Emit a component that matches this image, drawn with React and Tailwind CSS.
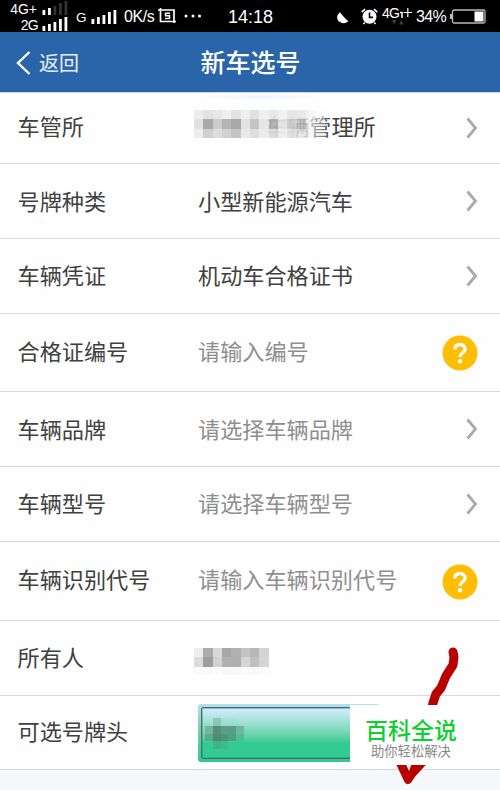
const ROWS = [
  { label: '车管所', kind: 'office', height: 'h-[71px]', shift: '-mt-[6px]' },
  { label: '号牌种类', value: '小型新能源汽车', arrow: true, height: 'h-[75px]', shift: '-mt-[3px]' },
  { label: '车辆凭证', value: '机动车合格证书', arrow: true, height: 'h-[75px]', shift: '-mt-[4px]' },
  { label: '合格证编号', placeholder: '请输入编号', help: true, height: 'h-[78px]', shift: '-mt-[6px]' },
  { label: '车辆品牌', placeholder: '请选择车辆品牌', arrow: true, height: 'h-[75px]', shift: '-mt-[3px]' },
  { label: '车辆型号', placeholder: '请选择车辆型号', arrow: true, height: 'h-[75px]', shift: '-mt-[4px]' },
  { label: '车辆识别代号', placeholder: '请输入车辆识别代号', help: true, height: 'h-[79px]', shift: '-mt-[6px]' },
  { label: '所有人', kind: 'owner', height: 'h-[75px]', shift: '-mt-[4px]' },
  { label: '可选号牌头', kind: 'plate', height: 'h-[74px]', shift: '-mt-[5px]' },
];

const OFFICE_TILES = [
  ['#e9e9e9', '#dedede', '#e3e3e3', '#eeeeee', '#dfdfdf', '#ededed', '#dcdcdc', '#eeeeee', '#e3e3e3', '#efefef', '#e3e3e3', '#e5e5e5', '#eeeeeecc', '#f8f8f866'],
  ['#dcdcdc', '#9b9b9b', '#c4c4c4', '#a9a9a9', '#9b9b9b', '#dedede', '#bcbcbc', '#e2e2e2', '#a8a8a8', '#dfdfdf', '#c6c6c6', '#a9a9a9cc', '#d8d8d866', '#eeeeee33'],
  ['#eaeaea', '#c8c8c8', '#d8d8d8', '#c9c9c9', '#bcbcbc', '#e6e6e6', '#d8d8d8', '#e9e9e9', '#d6d6d6', '#ebebeb', '#dddddd', '#d5d5d5aa', '#e2e2e266', '#f1f1f133'],
];

const OWNER_TILES = [
  ['#ededed', '#ababab', '#d9d9d9', '#a7a7a7', '#b1b1b1', '#c3c3c3', '#b7b7b7', '#d4d4d4'],
  ['#dcdcdc', '#9e9e9e', '#d2d2d2', '#b0b0b0', '#afafaf', '#d6d6d6', '#bfbfbf', '#d5d5d5'],
  ['#fbfbfb', '#fafafa', '#fdfdfd', '#f8f8f8', '#f8f8f8', '#fafafa', '#f8f8f8', '#fbfbfb'],
];

const PLATE_TILES = [
  ['#9bd6c800', '#8cc6b8', '#9bdccc44', '#95dccb44', '#9bdccc00'],
  ['#73b49f', '#568e7c', '#5f9c87', '#5c9c87', '#6bb9a0'],
  ['#58ab8b', '#498d72', '#4c9578', '#4ba27f', '#55bb96'],
  ['#3cc79500', '#3bb588', '#3ebb8e', '#3cc79500', '#3cc79500'],
];

function Mosaic({ tiles, size, className }) {
  return (
    <svg
      width={tiles[0].length * size}
      height={tiles.length * size}
      className={className}
      shapeRendering="crispEdges"
    >
      {tiles.map((row, y) =>
        row.map((fill, x) => (
          <rect key={`${x}-${y}`} x={x * size} y={y * size} width={size} height={size} fill={fill} />
        ))
      )}
    </svg>
  );
}

function Signal({ lit = 5 }) {
  const heights = [5, 7, 9, 12, 14];
  return (
    <svg width="26" height="15" className="shrink-0">
      {heights.map((h, i) => (
        <rect key={i} x={0.5 + i * 5.5} y={15 - h} width="2.8" height={h} fill={i < lit ? '#fff' : '#333'} />
      ))}
    </svg>
  );
}

function StatusBar() {
  return (
    <div className="flex h-8 items-center overflow-hidden bg-black pl-[10px] font-['Liberation_Sans',sans-serif] text-white">
      <div className="-mt-px w-[58px] shrink-0">
        <div className="flex h-4 items-center justify-between">
          <span className="-ml-px w-7 pt-[2px] text-right text-[14px] leading-4 whitespace-nowrap">4G+</span>
          <Signal lit={2} />
        </div>
        <div className="flex h-4 items-center justify-between">
          <span className="w-7 pt-[2px] text-right text-[14px] leading-4 tracking-[-0.7px]">2G</span>
          <Signal />
        </div>
      </div>
      <span className="ml-[8px] w-[15px] pt-[4px] text-[13.5px]">G</span>
      <Signal />
      <span className="ml-[7px] w-[34px] pt-px text-[16px] tracking-[-0.4px] whitespace-nowrap">0K/s</span>
      <svg width="19" height="16" viewBox="0 0 19 16" fill="none" stroke="#fff" className="shrink-0">
        <path d="M0 2h16v13M2.500 0v13.500H18" strokeWidth="1.700" />
        <path d="M12 5.200H7.500v2.600h4v2.700H7" strokeWidth="1.500" />
      </svg>
      <svg width="18" height="4" className="ml-[7px] shrink-0" fill="#fff">
        <circle cx="2" cy="2" r="1.500" />
        <circle cx="9" cy="2" r="1.500" />
        <circle cx="15.500" cy="2" r="1.500" />
      </svg>
      <span className="ml-[26px] w-[45px] shrink-0 pt-[2px] text-[18px] whitespace-nowrap">14:18</span>
      <svg width="12" height="12" className="ml-[64px] mt-[4px] shrink-0">
        <path d="M3 .3C-.7 3-.7 7.500 2.500 9.800c2.800 2 6.300 1.700 8.700-.6C8 7.500 5 4 3 .3Z" fill="#fff" />
        <path d="M3 1 10.500 9.200 4 9Z" fill="#fff" stroke="#fff" strokeWidth="0.5" />
      </svg>
      <svg width="17" height="17" viewBox="0 0 17 17" className="ml-[12px] shrink-0">
        <circle cx="8.500" cy="8.800" r="7" fill="#fff" />
        <path d="M.7 4.200 4 1.200M16.300 4.200 13 1.200M3.700 14.500 2.500 16M13.300 14.500l1.200 1.500" stroke="#fff" strokeWidth="1.600" />
        <path d="M8.500 4.500V9.400H12" fill="none" stroke="#000" strokeWidth="1.600" />
      </svg>
      <div className="relative ml-[4px] mb-[6px] flex w-[31px] shrink-0 items-center text-[14px] leading-4">
        <span className="w-[18px] tracking-[-0.7px]">4G</span>
        <svg width="12" height="12" className="shrink-0" fill="none" stroke="#fff">
          <path d="M0 5.500h2.500M2 5v6" strokeWidth="1.500" />
          <path d="M3.500 5.500H12M7.800 1v9" strokeWidth="1.200" />
        </svg>
        <svg width="12" height="5" className="absolute top-[15px] left-[10px]" fill="#3d3d3d">
          <path d="M0 0h4.500L2.250 4.500ZM7 4.500h4.500L9.250 0Z" />
        </svg>
      </div>
      <span className="ml-[3px] w-[34px] shrink-0 pt-[2px] text-[16px] tracking-[-0.600px]">34%</span>
      <svg width="36" height="15" className="shrink-0">
        <rect x="2.500" y="1" width="32.500" height="13" rx="1.500" fill="none" stroke="#bbb" strokeWidth="1.300" />
        <path d="M0 5h2v5H0Z" fill="#bbb" />
        <rect x="24.500" y="2.500" width="9" height="10" fill="#fff" />
      </svg>
    </div>
  );
}

function Header() {
  return (
    <header className="relative flex h-[61px] items-center justify-center border-b border-[#c5dcf1] bg-[#2b65a9] text-white">
      <div className="absolute left-4 flex items-center">
        <svg width="15" height="24" viewBox="0 0 15 24" fill="none" stroke="#fff" strokeWidth="2.400" className="mt-[2px]">
          <path d="M13.500 1 2 12l11.500 11" />
        </svg>
        <span className="ml-[8px] pt-px text-[20px] leading-6 text-white/90">返回</span>
      </div>
      <h1 className="pb-[2px] pl-px text-[25px] font-medium leading-8">新车选号</h1>
    </header>
  );
}

function Arrow() {
  return (
    <svg width="12" height="22" viewBox="0 0 12 22" fill="none" stroke="#aaa" strokeWidth="2.800" className="ml-auto mr-[22px] shrink-0">
      <path d="m1.500 1.500 8 9.500-8 9.500" />
    </svg>
  );
}

function Help() {
  return (
    <svg width="36" height="36" viewBox="0 0 36 36" className="ml-auto mr-[22px] mt-px shrink-0">
      <circle cx="18" cy="18" r="17.500" fill="#ffbd05" />
      <path d="M12.800 14.300c.2-3.200 2.300-4.800 5.200-4.800s5.100 1.700 5.100 4.400c0 3.800-5.100 3.900-5.100 8.100" fill="none" stroke="#fff" strokeWidth="3.300" />
      <circle cx="18" cy="26.300" r="2.200" fill="#fff" />
    </svg>
  );
}

function OfficeValue() {
  return (
    <div className="relative -mt-[6px] pl-[67px] text-[#404040]">
      车辆管理所
      <div className="absolute top-0 left-0 h-8 w-[112px] bg-white/60" />
      <Mosaic tiles={OFFICE_TILES} size={9.33} className="absolute -left-[4px] top-[1px] opacity-85" />
      <div className="absolute left-[112px] top-0 h-8 w-[24px] bg-linear-to-r from-white/50 to-transparent" />
    </div>
  );
}

function PlateValue() {
  return (
    <div className="relative mt-px flex h-[58px] w-[182px] rounded-[3px] bg-linear-to-b from-[#b5dff2] via-[#68cfae] to-[#28c98c] p-[3px]">
      <div className="w-full rounded-[2px] border-[1.5px] border-[#496e68] bg-linear-to-b from-[#cdebfa] from-5% to-[#32cb93] to-70% pt-[10px] pl-[3px] shadow-[inset_0_0_0_1px_#496e6866]">
        <Mosaic tiles={PLATE_TILES} size={7.8} />
      </div>
    </div>
  );
}

function Row({ row }) {
  return (
    <div className={`flex items-center border-b border-[#d8d8d8] pl-[17.5px] ${row.height}`}>
      <div className={`w-[180.500px] shrink-0 text-[#404040] ${row.shift}`}>{row.label}</div>
      {row.value && <div className={`text-[#404040] ${row.shift}`}>{row.value}</div>}
      {row.placeholder && <div className={`text-[#8e8e8e] ${row.shift}`}>{row.placeholder}</div>}
      {row.kind === 'office' && <OfficeValue />}
      {row.kind === 'owner' && <Mosaic tiles={OWNER_TILES} size={9.33} className="-ml-[4px] mt-[7px]" />}
      {row.kind === 'plate' && <PlateValue />}
      {(row.arrow || row.kind === 'office') && <Arrow />}
      {row.help && <Help />}
    </div>
  );
}

export default function App() {
  return (
    <div className="relative flex h-[790px] w-[500px] flex-col overflow-hidden bg-[#f4f8fa] font-['Noto_Sans_CJK_SC',sans-serif]">
      <StatusBar />
      <Header />
      <main className="bg-[#fefefe] text-[22.15px] leading-8">
        {ROWS.map(row => (
          <Row key={row.label} row={row} />
        ))}
      </main>
      <div className="absolute left-[190px] top-[93px] h-[8px] w-[140px] bg-radial from-[#eef4fb] to-transparent to-70%" />

      {/* Hand-drawn check mark, partly hidden by the badge */}
      <svg width="100" height="150" className="absolute left-[390px] top-[640px]" fill="none" stroke="#b90000" strokeLinecap="round" strokeLinejoin="round">
        <path d="M63 12 64 17 63 25 56 36 51 48 46 54 43 63 39 80" strokeWidth="9" />
        <path d="M9 121 18 140 22 134 34 121Z" fill="#b90000" strokeWidth="8" />
        <path d="M14 120h9l-4 11Z" fill="#fefefe" stroke="none" />
      </svg>
      <div className="absolute left-[350px] top-[705px] flex h-[60px] w-[150px] flex-col bg-white pt-[8px] whitespace-nowrap">
        <div className="pl-[15px] text-[23px] font-medium leading-8 text-[#0bd02e]">百科全说</div>
        <div className="pl-[21px] text-[13.3px] leading-[12px] text-[#888]">助你轻松解决</div>
      </div>
    </div>
  );
}
